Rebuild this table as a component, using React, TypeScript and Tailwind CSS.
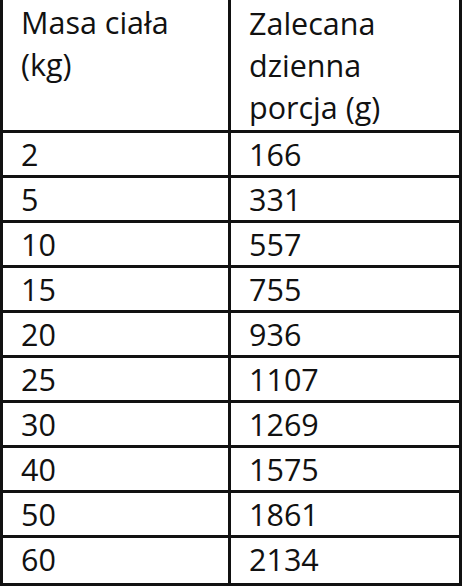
import React from "react";

const rows: [string, string][] = [
  ["2", "166"],
  ["5", "331"],
  ["10", "557"],
  ["15", "755"],
  ["20", "936"],
  ["25", "1107"],
  ["30", "1269"],
  ["40", "1575"],
  ["50", "1861"],
  ["60", "2134"],
];

export default function App() {
  return (
    <div className="w-[464px] h-[587px] bg-white text-[#111] font-['Open_Sans',sans-serif] text-[30.5px] leading-[42px]">
      <div className="w-[462px] border-l-[3px] border-r-[3px] border-b-[3px] border-[#111]">
        <div className="grid grid-cols-[228px_1fr] h-[133px] border-b-[3px] border-[#111]">
          <div className="border-r-[3px] border-[#111] pl-[18px] pt-[1px]">
            Masa ciała
            <br />
            (kg)
          </div>
          <div className="pl-[18px] pt-[2px]">
            Zalecana
            <br />
            dzienna
            <br />
            porcja (g)
          </div>
        </div>
        {rows.map(([kg, g], i) => (
          <div
            key={kg}
            className={
              "grid grid-cols-[228px_1fr] h-[45px] " +
              (i < rows.length - 1 ? "border-b-[3px] border-[#111]" : "")
            }
          >
            <div className="border-r-[3px] border-[#111] pl-[18px]">{kg}</div>
            <div className="pl-[18px]">{g}</div>
          </div>
        ))}
      </div>
    </div>
  );
}
